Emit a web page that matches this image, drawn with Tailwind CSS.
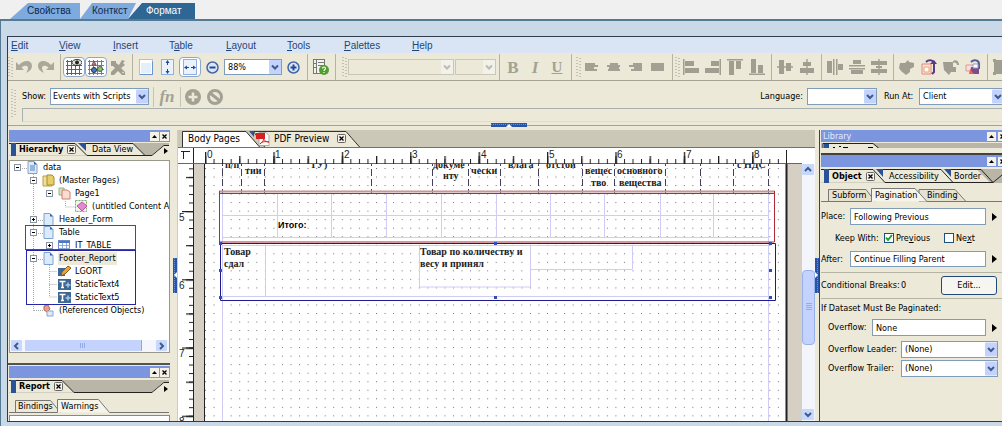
<!DOCTYPE html>
<html lang="ru">
<head>
<meta charset="utf-8">
<title>Формат</title>
<script src="https://cdn.jsdelivr.net/npm/@tailwindcss/browser@4"></script>
</head>
<body class="h-screen overflow-hidden bg-[#f0f0f0] font-['DejaVu_Sans_Condensed','DejaVu_Sans',sans-serif] text-[9px] leading-[13px] text-black">
<svg width="0" height="0" class="absolute">
  <defs>
    <symbol id="chev" viewBox="0 0 12 14"><rect width="12" height="14" rx="1" fill="#c3d3fd"/><path d="M3 5.5l3 3 3-3" fill="none" stroke="#3f5a8c" stroke-width="2"/></symbol>
    <symbol id="chevoff" viewBox="0 0 12 14"><rect width="12" height="14" rx="1" fill="#f3f2ea"/><path d="M3 5.5l3 3 3-3" fill="none" stroke="#bdbcae" stroke-width="2"/></symbol>
    <symbol id="up" viewBox="0 0 9 9"><rect width="9" height="9" fill="#f3f1e8"/><path d="M2 6l2.5-3L7 6z"/></symbol>
    <symbol id="x" viewBox="0 0 9 9"><rect width="9" height="9" fill="#f3f1e8"/><path d="M2.5 2.5l4 4m0-4l-4 4" stroke="#000" stroke-width="1.3"/></symbol>
    <symbol id="tabx" viewBox="0 0 9 9"><rect x=".5" y=".5" width="8" height="8" rx="1" fill="#f6f4e8" stroke="#666"/><path d="M2.5 2.5l4 4m0-4l-4 4" stroke="#000" stroke-width="1.3"/></symbol>
    <symbol id="grip" viewBox="0 0 5 20"><path d="M1 0v20M4 1v19" stroke="#9c9a8c" stroke-dasharray="1 2"/></symbol>
    <symbol id="minus" viewBox="0 0 9 9"><rect x="1.500" y="1.500" width="6" height="6" fill="#fff" stroke="#8a93a0"/><path d="M3 4.500h3" stroke="#000"/></symbol>
    <symbol id="plus" viewBox="0 0 9 9"><rect x="1.500" y="1.500" width="6" height="6" fill="#fff" stroke="#8a93a0"/><path d="M3 4.500h3M4.500 3v3" stroke="#000"/></symbol>
    <symbol id="doc" viewBox="0 0 13 13"><path d="M2 .5h6l3 3v9H2z" fill="#dcebfb" stroke="#7fa3cf"/><path d="M8 .5v3h3z" fill="#2f62a8"/></symbol>
    <symbol id="txt" viewBox="0 0 13 13"><rect y="1" width="13" height="11" fill="#3e6791"/><path d="M1.500 3.500h6M4.500 3.500v6M3 9.500h3" stroke="#fff" stroke-width="1.500"/><path d="M10 4.500v5M7.500 7h5" stroke="#a9c8e8" stroke-width="1.500"/></symbol>
  </defs>
</svg>

<div class="flex h-full flex-col">
  <nav class="flex h-[19px] shrink-0 items-end pl-[10px] font-['Liberation_Sans',sans-serif] text-[10px] leading-4">
    <button class="h-4 w-[70px] bg-[#7eaade] pl-[17px] text-left text-[#10284a] [clip-path:polygon(18px_0,100%_0,100%_100%,0_100%)]">Свойства</button>
    <button class="h-4 w-[56px] bg-[#7eaade] pl-3 text-left text-[#10284a] [clip-path:polygon(12px_0,100%_0,48px_100%,0_100%)]">Конткст</button>
    <button class="-ml-2 h-4 w-[67px] bg-[#2e6694] pl-[18px] text-left text-white [clip-path:polygon(14px_0,100%_0,100%_100%,0_100%)]">Формат</button>
  </nav>

  <div class="flex min-h-0 flex-1 flex-col border-t-2 border-l border-[#557b94] bg-[#cad9e8] pt-[15px] pb-1 pl-[6px]">
    <div class="flex min-h-0 flex-1 flex-col overflow-hidden border border-r-0 border-[#2f3d4a] bg-[#ece9d8]">

      <nav class="flex h-4 shrink-0 items-center bg-[#d9e5f5] pl-[3px] font-['Liberation_Sans',sans-serif] text-[10px] text-[#1d4577]">
        <button class="w-12 text-left"><u>E</u>dit</button>
        <button class="w-[54px] text-left"><u>V</u>iew</button>
        <button class="w-14 text-left"><u>I</u>nsert</button>
        <button class="w-[57px] text-left">T<u>a</u>ble</button>
        <button class="w-[61px] text-left"><u>L</u>ayout</button>
        <button class="w-[57px] text-left"><u>T</u>ools</button>
        <button class="w-[68px] text-left"><u>P</u>alettes</button>
        <button class="text-left"><u>H</u>elp</button>
      </nav>

      <div class="flex h-7 shrink-0 items-center border-b border-[#a5a395] pt-px [&>button]:flex [&>button]:h-5 [&>button]:w-[22px] [&>button]:shrink-0 [&>button]:items-center [&>button]:justify-center [&>i]:mr-[2px] [&>i]:ml-[3px] [&>i]:h-[26px] [&>i]:w-px [&>i]:shrink-0 [&>i]:bg-[#b5b3a4]">
        <svg class="h-5 w-[5px] shrink-0"><use href="#grip"/></svg>
        <button aria-label="Undo"><svg width="16" height="14"><path d="M0 2v8h8L5.500 7.500C8 5 12 5 12 8c0 2-1 3-2 5 4-2 6-4 6-7 0-6-8-7-13-1z" fill="#aaa89b"/></svg></button>
        <button aria-label="Redo"><svg width="16" height="14"><path d="M16 2v8H8l2.500-2.500C8 5 4 5 4 8c0 2 1 3 2 5-4-2-6-4-6-7 0-6 8-7 13-1z" fill="#aaa89b"/></svg></button>
        <i></i>
        <button aria-label="Grid" class="rounded-sm border border-[#8fa6c8] bg-white"><svg width="16" height="16"><path d="M0 2.500h16M0 6.500h16M0 10.500h16M0 14.500h16M1.500 1v15M5.500 1v15M9.500 1v15M13.500 1v15" stroke="#2f66c8"/><ellipse cx="11" cy="3.500" rx="5" ry="3" fill="#dfe6d8" stroke="#333"/><circle cx="11" cy="3.500" r="2" fill="#222"/></svg></button>
        <button aria-label="Snap" class="rounded-sm border border-[#8fa6c8] bg-white"><svg width="16" height="16"><path d="M0 2.500h16M0 6.500h16M0 10.500h16M0 14.500h16M1.500 1v15M5.500 1v15M9.500 1v15M13.500 1v15" stroke="#4f82d8"/><path d="M4 6l2-4 2 4z" fill="#c98a8a" stroke="#7a4a5a"/><circle cx="6" cy="11" r="2.500" fill="#4a78c0" stroke="#234"/><circle cx="12" cy="10" r="2.500" fill="#8fbf6a" stroke="#465"/></svg></button>
        <button aria-label="Tools"><svg width="16" height="16"><path d="M1 2h5v2l3 2 3-5 3 1-2 2 2 2-4 3 4 4v3h-3l-4-4-4 4H1v-3l4-4-2-2H1z" fill="#a09e91"/><path d="M1 11l3-3M12 13l2 1" stroke="#ece9d8" fill="none"/></svg></button>
        <i></i>
        <button aria-label="Full page"><svg width="14" height="16"><rect x=".5" y=".5" width="13" height="15" fill="#fff" stroke="#a9c0e4"/><path d="M2 4h10v10H2z" fill="#e4effc"/><path d="M1 15.500h12.500v-13" stroke="#6b93cf" fill="none"/></svg></button>
        <button aria-label="Fit height"><svg width="14" height="16"><rect x=".5" y=".5" width="12" height="15" fill="#e9f2fd" stroke="#8fb0e0"/><path d="M6.500 2v4M6.500 10v4" stroke="#224a94"/><path d="M4.500 4l2-3 2 3zM4.500 12l2 3 2-3z" fill="#224a94"/></svg></button>
        <button aria-label="Fit width" class="rounded-sm border border-[#8fa6c8] bg-white"><svg width="14" height="16"><rect x=".5" y=".5" width="13" height="15" fill="#e9f2fd" stroke="#8fb0e0"/><path d="M2 8.500h4M8 8.500h4" stroke="#224a94"/><path d="M4 6.500l-3 2 3 2zM10 6.500l3 2-3 2z" fill="#224a94"/></svg></button>
        <button aria-label="Zoom out"><svg width="13" height="13"><circle cx="6.500" cy="6.500" r="5.500" fill="#dbe7f8" stroke="#4467a8" stroke-width="1.500"/><path d="M3.500 6.500h6" stroke="#234a94" stroke-width="2"/></svg></button>
        <div class="relative ml-px h-4 w-[58px] shrink-0">
          <select aria-label="Zoom" class="h-full w-full appearance-none border border-[#7f9db9] bg-white pl-[3px] leading-none"><option>88%</option></select>
          <svg class="pointer-events-none absolute top-px right-px h-[14px] w-3"><use href="#chev"/></svg>
        </div>
        <button aria-label="Zoom in"><svg width="13" height="13"><circle cx="6.500" cy="6.500" r="5.500" fill="#dbe7f8" stroke="#4467a8" stroke-width="1.500"/><path d="M3.500 6.500h6M6.500 3.500v6" stroke="#234a94" stroke-width="2"/></svg></button>
        <i></i>
        <button aria-label="Guide"><svg width="16" height="16"><rect x=".5" y=".5" width="11" height="14" fill="#f3f3ee" stroke="#777"/><path d="M3.500 1v13M5 3.500h6M5 6.500h6M1 4.500h2M1 8.500h2" stroke="#777"/><circle cx="11" cy="11" r="5" fill="#4f9e2f"/><path d="M9.500 9.500c0-2 3-2 3 0 0 1-1.500 1-1.500 2.500M11 13v1" stroke="#fff" fill="none" stroke-width="1.200"/></svg></button>
        <i></i>
        <svg class="ml-1 h-5 w-[5px] shrink-0"><use href="#grip"/></svg>
        <div class="relative ml-px h-4 w-[106px] shrink-0">
          <select aria-label="Font" disabled class="h-full w-full appearance-none border border-[#c9c7ba] bg-[#ece9d8]"></select>
          <svg class="pointer-events-none absolute top-px right-px h-[14px] w-3"><use href="#chevoff"/></svg>
        </div>
        <div class="relative ml-px h-4 w-[41px] shrink-0">
          <select aria-label="Font size" disabled class="h-full w-full appearance-none border border-[#c9c7ba] bg-[#ece9d8]"></select>
          <svg class="pointer-events-none absolute top-px right-px h-[14px] w-3"><use href="#chevoff"/></svg>
        </div>
        <i></i>
        <button class="font-['Liberation_Serif',serif] text-[17px] font-bold text-[#a3a194]">B</button>
        <button class="font-['Liberation_Serif',serif] text-[17px] font-bold text-[#a3a194] italic">I</button>
        <button class="font-['Liberation_Serif',serif] text-[15px] font-bold text-[#a3a194] underline">U</button>
        <i></i>
        <svg class="ml-[2px] h-5 w-[5px] shrink-0"><use href="#grip"/></svg>
        <button aria-label="Align left"><svg width="14" height="8"><path d="M0 1h10M0 3h13M0 5h9M0 7h12" stroke="#a3a194" stroke-width="1.800"/></svg></button>
        <button aria-label="Align center"><svg width="14" height="8"><path d="M3 1h8M0 3h13M2 5h10M1 7h12" stroke="#a3a194" stroke-width="1.800"/></svg></button>
        <button aria-label="Align right"><svg width="14" height="8"><path d="M4 1h9M0 3h13M5 5h8M2 7h11" stroke="#a3a194" stroke-width="1.800"/></svg></button>
        <button aria-label="Justify"><svg width="14" height="8"><path d="M0 1h13M0 3h13M0 5h13M0 7h13" stroke="#a3a194" stroke-width="1.800"/></svg></button>
        <i></i>
        <svg class="h-5 w-[5px] shrink-0"><use href="#grip"/></svg>
        <button aria-label="Left edges"><svg width="16" height="16" fill="#a09e91"><path d="M0 0h1.500v16H0zM2 2h9v5H2zM2 9h14v5H2z"/></svg></button>
        <button aria-label="Right edges"><svg width="16" height="16" fill="#a09e91"><path d="M14.500 0H16v16h-1.500zM6 2h8v5H6zM0 9h14v5H0z"/></svg></button>
        <button aria-label="Top edges"><svg width="16" height="16" fill="#a09e91"><path d="M0 0h16v1.500H0zM2 2h5v14H2zM9 2h5v8H9z"/></svg></button>
        <button aria-label="Bottom edges"><svg width="16" height="16" fill="#a09e91"><path d="M0 14.500h16V16H0zM2 0h5v14H2zM9 6h5v8H9z"/></svg></button>
        <i></i>
        <button aria-label="Middles"><svg width="16" height="16" fill="#a09e91"><path d="M0 7.300h16v1.400H0zM2 1h5v14H2zM9 4h5v8H9z"/></svg></button>
        <button aria-label="Centers"><svg width="16" height="16" fill="#a09e91"><path d="M7.300 0h1.400v16H7.300zM4 3h8v4H4zM1 9h14v5H1z"/></svg></button>
        <i></i>
        <button aria-label="Spread across"><svg width="16" height="16" fill="#a09e91"><path d="M0 2h5v12H0zM6 0h1.500v16H6zM9 0h1.500v16H9zM11 5h5v6h-5z"/></svg></button>
        <button aria-label="Spread down"><svg width="16" height="16" fill="#a09e91"><path d="M4 1h8v4H4zM0 6h16v1.500H0zM0 9h16v1.500H0zM2 11h12v4H2z"/></svg></button>
        <button aria-label="Center in page"><svg width="16" height="16" fill="#a09e91"><path d="M0 2h16v4H0zM5 7h6v2H5zM0 10h16v4H0zM7.300 0h1.400v16H7.300z"/></svg></button>
        <i></i>
        <button aria-label="Bring forward"><svg width="16" height="16" fill="#a09e91"><path d="M1 4h5l3-3 1 2 5 1v4l-4 2v3l-4 3-5-4-2-3z"/></svg></button>
        <button aria-label="Bring to front"><svg width="16" height="16"><path d="M1 5h9v10H1z" fill="#fbe3da" stroke="#e08a78"/><path d="M3 8h5v5H3z" fill="#fff" stroke="#e8a070"/><path d="M5 3c3-3 8-2 8 2v8l-2 2" fill="none" stroke="#5a3c86" stroke-width="2"/><path d="M9 5h7l-3-4z" fill="#5a3c86"/></svg></button>
        <button aria-label="Send backward"><svg width="16" height="16" fill="#a09e91"><path d="M0 3h10v5h3v5H8l-2 3-5-5zM10 2c3-2 6 0 6 4h-2c0-2-2-3-4-2z"/></svg></button>
        <button aria-label="Send to back"><svg width="16" height="16"><path d="M1 6h8v6H1z" fill="#f8ded9" stroke="#d99"/><path d="M6 8h8v7H5z" fill="#7d4a8c"/><path d="M6 3c3-3 8-2 8 2v5" fill="none" stroke="#4d5c9a" stroke-width="2"/><path d="M5 10l4 5-5 0z" fill="#e0664c"/><path d="M8 5h5v4H8z" fill="#fff" stroke="#99b"/></svg></button>
        <i></i>
        <button aria-label="Group"><svg width="16" height="16" fill="#a09e91"><path d="M0 0h3v1h13v14H3v1H0v-3h1V3H0z"/></svg></button>
      </div>

      <div class="flex h-[45px] shrink-0 gap-[6px] border-b border-[#a5a395] pl-[3px]">
        <svg class="mt-2 h-7 w-[5px] shrink-0" viewBox="0 0 5 28"><path d="M1 0v28M4 1v27" stroke="#9c9a8c" stroke-dasharray="1 2"/></svg>
        <div class="flex min-w-0 flex-1 flex-col">
          <div class="flex h-[27px] shrink-0 items-center pt-1">
            <label for="show" class="w-7 shrink-0">Show:</label>
            <div class="relative h-[17px] w-[99px] shrink-0">
              <select id="show" class="h-full w-full appearance-none border border-[#7f9db9] bg-white pl-[2px] leading-none"><option>Events with Scripts</option></select>
              <svg class="pointer-events-none absolute top-px right-px h-[15px] w-3"><use href="#chev"/></svg>
            </div>
            <span class="mr-[2px] ml-1 h-5 w-px bg-[#c5c3b4]"></span>
            <button class="w-[22px] font-['Liberation_Serif',serif] text-[17px] font-bold text-[#a3a194] italic">fn</button>
            <span class="mr-1 ml-[2px] h-5 w-px bg-[#c5c3b4]"></span>
            <button aria-label="Add" class="w-[22px]"><svg width="16" height="16"><circle cx="8" cy="8" r="8" fill="#a3a194"/><path d="M3.500 8h9M8 3.500v9" stroke="#ece9d8" stroke-width="2.500"/></svg></button>
            <button aria-label="Cancel"><svg width="16" height="16"><circle cx="8" cy="8" r="6.500" fill="none" stroke="#a3a194" stroke-width="3"/><path d="M3 4l10 8" stroke="#a3a194" stroke-width="3"/></svg></button>
            <label for="lang" class="mr-1 ml-auto">Language:</label>
            <div class="relative h-[17px] w-[70px] shrink-0">
              <select id="lang" class="h-full w-full appearance-none border border-[#7f9db9] bg-white"></select>
              <svg class="pointer-events-none absolute top-px right-px h-[15px] w-3"><use href="#chev"/></svg>
            </div>
            <label for="runat" class="ml-[7px] w-[35px] shrink-0 whitespace-nowrap">Run At:</label>
            <div class="relative -mr-[3px] h-[17px] w-[86px] shrink-0">
              <select id="runat" class="h-full w-full appearance-none border border-[#7f9db9] bg-white pl-[3px] leading-none"><option>Client</option></select>
              <svg class="pointer-events-none absolute top-px right-px h-[15px] w-3"><use href="#chev"/></svg>
            </div>
          </div>
          <input aria-label="Script" disabled class="h-[14px] w-full border border-r-0 border-[#a9b0ae] border-b-[#dedbca] bg-[#ece9d8]">
        </div>
      </div>

      <div class="relative flex min-h-0 flex-1 pt-1">
        <svg class="absolute -top-[3px] left-1/2 -ml-[14px]" width="36" height="4"><rect width="36" height="4" fill="#2855a8"/><path d="M0 1.500h36" stroke="#6d93d8" stroke-dasharray="1 1"/><path d="M15 4l3-3 3 3z" fill="#fff"/></svg>

        <aside class="flex w-[162px] shrink-0 flex-col">
          <section class="flex min-h-0 flex-1 flex-col border-b-2 border-[#55534a] pl-px">
            <div class="flex h-3 shrink-0 items-center justify-end gap-px bg-[#7b96df] pr-px"><svg width="9" height="9"><use href="#up"/></svg><svg width="9" height="9"><use href="#x"/></svg></div>
            <div class="relative mt-px flex h-[13px] shrink-0 items-center">
              <svg class="absolute inset-0" width="160" height="13"><rect width="160" height="13" fill="#b9b6a8"/><path d="M0 .5h66l12 12H0z" fill="#ece9d8"/><path d="M66 .5l12 12h58L124 .5z" fill="#ece9d8"/><path d="M0 .5h66l12 12h58L124 .5H74M136 12.500h7l12-10h5" fill="none" stroke="#222"/><path d="M143 13l12-10h5v10z" fill="#ece9d8"/><path d="M2 0h5v13H2zM69 0h8v8z" fill="#2a5298"/><path d="M155 5l4 3-4 3z"/></svg>
              <button class="relative ml-[10px] flex w-[73px] items-center gap-1 font-bold">Hierarchy<svg width="9" height="9"><use href="#tabx"/></svg></button>
              <button class="relative whitespace-nowrap">Data View</button>
            </div>
            <div class="mt-1 mb-[10px] flex min-h-0 flex-1 flex-col border border-[#9a988a] bg-white">
              <ul class="relative flex-1 overflow-hidden whitespace-nowrap [&>li]:flex [&>li]:h-[13px] [&>li]:items-center [&>li]:gap-1 [&>li>svg]:shrink-0">
                <svg class="absolute inset-0" width="160" height="170"><path d="M23.500 13v137M24 149.500h10M24 59.500h10M24 72.500h10M24 98.500h10M39.500 33v4M55.500 40v6h10M39.500 104v32h8M39.500 110.500h8M39.500 123.500h8M12 7.500h6" fill="none" stroke="#aaa" stroke-dasharray="1 1"/></svg>
                <li class="relative pl-[3px]"><svg width="9" height="9"><use href="#minus"/></svg><svg width="13" height="13"><use href="#doc"/><path d="M4 5h5M4 7h5M4 9h5" stroke="#5580b8"/></svg>data</li>
                <li class="relative pl-[19px]"><svg width="9" height="9"><use href="#minus"/></svg><svg width="13" height="13"><path d="M1 2h6l3 2v8H1z" fill="#efe0a0" stroke="#b99d3a"/><path d="M5 1h5l2 2v8H5z" fill="#e6cf6a" stroke="#a98a2a"/></svg>(Master Pages)</li>
                <li class="relative pl-[35px]"><svg width="9" height="9"><use href="#minus"/></svg><svg width="13" height="13"><path d="M1 1h5v7H1z" fill="#d7e3c8" stroke="#9aaf88"/><path d="M4 3h5l3 2v7H4z" fill="#fbdcd0" stroke="#cc8070"/></svg>Page1</li>
                <li class="relative pl-[65px]"><svg width="13" height="13"><rect x=".5" y=".5" width="11" height="11" fill="#eef6e6" stroke="#7fa86a" stroke-dasharray="2 1"/><path d="M7 2l5 4-5 5-5-5z" fill="#e08ad0" stroke="#c050b0"/></svg>(untitled Content Ar</li>
                <li class="relative pl-[19px]"><svg width="9" height="9"><use href="#plus"/></svg><svg width="13" height="13"><use href="#doc"/></svg>Header_Form</li>
                <li class="relative pl-[19px]"><svg width="9" height="9"><use href="#minus"/></svg><svg width="13" height="13"><use href="#doc"/></svg>Table</li>
                <li class="relative pl-[35px]"><svg width="9" height="9"><use href="#plus"/></svg><svg width="13" height="13"><rect x=".5" y="1.500" width="11" height="10" fill="#fff" stroke="#6a8cc8"/><path d="M1 2h11v2H1z" fill="#4f78c0"/><path d="M1 6.500h11M1 9.500h11M4.500 4v8M8.500 4v8" stroke="#8fa9da"/></svg>IT_TABLE</li>
                <li class="relative pl-[19px]"><svg width="9" height="9"><use href="#minus"/></svg><svg width="13" height="13"><use href="#doc"/></svg><span class="-ml-px bg-[#ece9d8] px-px">Footer_Report</span></li>
                <li class="relative pl-[48px]"><svg width="13" height="13"><path d="M0 3h7v8H0z" fill="#3e6791"/><path d="M3 11l1-4 6-6 3 2-6 6z" fill="#eda23c" stroke="#8a5a20"/></svg>LGORT</li>
                <li class="relative pl-[48px]"><svg width="13" height="13"><use href="#txt"/></svg>StaticText4</li>
                <li class="relative pl-[48px]"><svg width="13" height="13"><use href="#txt"/></svg>StaticText5</li>
                <li class="relative pl-[32px]"><svg width="13" height="13"><path d="M2 2l4-1 2 4-3 3-3-2z" fill="#e8a088" stroke="#b06a58"/><path d="M5 7h6v5H5z" fill="#dfe9f8" stroke="#8aa5d0"/></svg>(Referenced Objects)</li>
                <svg class="absolute inset-0" width="160" height="170"><rect x="15.500" y="64.500" width="110" height="24" fill="none" stroke="#e01020"/><rect x="16.500" y="89.500" width="109" height="54" fill="none" stroke="#2525a8"/></svg>
              </ul>
              <svg class="h-[12px] w-full shrink-0"><rect width="160" height="12" fill="#f5f6fb"/><rect x="1" width="11" height="11" rx="1" fill="#c8d7fc"/><path d="M8 3L5 6l3 3" fill="none" stroke="#3f5a8c" stroke-width="2"/><rect x="15" width="116" height="11" rx="1" fill="#c3d3fd"/><path d="M131.500 0v11" stroke="#8fa9e0"/><path d="M70.500 3v5M72.500 3v5M74.500 3v5" stroke="#93abe8"/><rect x="146" width="11" height="11" rx="1" fill="#c8d7fc"/><path d="M150 3l3 3-3 3" fill="none" stroke="#3f5a8c" stroke-width="2"/></svg>
            </div>
          </section>
          <section class="flex h-[56px] shrink-0 flex-col pt-px pl-px">
            <div class="flex h-3 shrink-0 items-center justify-end gap-px bg-[#7b96df] pr-px"><svg width="9" height="9"><use href="#up"/></svg><svg width="9" height="9"><use href="#x"/></svg></div>
            <div class="relative mt-[2px] flex h-[13px] shrink-0 items-center">
              <svg class="absolute inset-0" width="160" height="13"><rect width="160" height="13" fill="#b9b6a8"/><path d="M0 .5h53l12 12H0z" fill="#ece9d8"/><path d="M0 .5h53l12 12h78l12-10h5" fill="none" stroke="#222"/><path d="M143 13l12-10h5v10z" fill="#ece9d8"/><path d="M2 0h5v13H2z" fill="#2a5298"/><path d="M155 6l4 3-4 3z"/></svg>
              <button class="relative ml-[10px] flex items-center gap-1 font-bold">Report<svg width="9" height="9"><use href="#tabx"/></svg></button>
            </div>
            <div class="relative mt-[6px] flex h-[14px] shrink-0 items-center">
              <svg class="absolute inset-0" width="160" height="14" fill="#ece9d8" stroke="#777"><path d="M6.500 13.500V1.500h35l10 12"/><path d="M0 13.500h48.500V.5h41l11 13H160" fill="#f6f4ea"/></svg>
              <button class="relative ml-[9px] w-[43px] text-left">Bindings</button>
              <button class="relative">Warnings</button>
            </div>
            <div class="mt-[2px] h-5 shrink-0 border border-[#888] bg-white"></div>
          </section>
        </aside>
        <div class="flex w-2 shrink-0 items-center justify-end border-r border-[#cfccbd]"><svg width="4" height="35"><rect width="4" height="35" fill="#2855a8"/><path d="M1.500 0v35" stroke="#6d93d8" stroke-dasharray="1 1"/><path d="M4 14l-3 3 3 3z" fill="#fff"/></svg></div>

        <main class="flex min-w-0 flex-1 flex-col">
          <div class="relative flex h-[18px] shrink-0 items-center border-b border-[#6f7468] bg-[#cbc8b8]">
            <svg class="absolute inset-0" width="200" height="17" stroke="#333"><path d="M75.500 1.500H168l14 16H87z" fill="#ece9d8"/><path d="M4.500 17.500V1.500H68l14 16z" fill="#fff"/><path d="M71 1h5v6z" fill="#2a5298" stroke="none"/></svg>
            <button class="relative ml-[10px] w-[68px] text-left text-[10px] whitespace-nowrap">Body Pages</button>
            <button class="relative flex items-center gap-1 text-[10px] whitespace-nowrap"><svg width="14" height="14"><path d="M3 .5h7l3 3v10H3z" fill="#fff" stroke="#aaa"/><rect width="9" height="6" y="1" fill="#d42020"/><path d="M4 12c4-3 4-5 3-7 0 3 3 5 6 5-4-1-8 0-9 2z" fill="none" stroke="#d42020"/></svg>PDF Preview<svg class="ml-1" width="9" height="9"><use href="#tabx"/></svg></button>
          </div>
          <div class="flex min-h-0 flex-1 bg-white">
            <svg class="min-w-0 flex-1" height="100%" viewBox="178 147 624 275" preserveAspectRatio="xMinYMin slice">
              <defs>
                <pattern id="dots" x="205" y="167" width="8.550" height="8.530" patternUnits="userSpaceOnUse"><rect width="1" height="1" fill="#70707a"/></pattern>
                <pattern id="ht" x="205" y="147" width="8.550" height="16" patternUnits="userSpaceOnUse"><rect y="11" width="1" height="5" fill="#222"/></pattern>
                <pattern id="hh" x="205" y="147" width="34.200" height="16" patternUnits="userSpaceOnUse"><rect y="8" width="1.300" height="8" fill="#222"/></pattern>
                <pattern id="hw" x="205" y="147" width="68.400" height="16" patternUnits="userSpaceOnUse"><rect y="4" width="1.300" height="12" fill="#222"/></pattern>
                <pattern id="vt" x="178" y="210" width="16" height="8.530" patternUnits="userSpaceOnUse"><rect x="11" width="4" height="1" fill="#222"/></pattern>
                <pattern id="vh" x="178" y="210" width="16" height="34.120" patternUnits="userSpaceOnUse"><rect x="8" width="7" height="1.200" fill="#222"/></pattern>
                <pattern id="vw" x="178" y="210" width="16" height="68.240" patternUnits="userSpaceOnUse"><rect x="4" width="11" height="1.200" fill="#222"/></pattern>
                <clipPath id="page"><rect x="205" y="163" width="600" height="300"/></clipPath>
              </defs>
              <rect x="178" y="147" width="700" height="300" fill="#fff"/>
              <rect x="193" y="162" width="610" height="300" fill="#d5d0c3"/>
              <rect x="205" y="162" width="582" height="300" fill="#fff"/>
              <path d="M193.500 147v300M204.500 162v300M786.500 149v300" stroke="#222"/>
              <path d="M786.500 162v300" stroke="#222" stroke-width="2"/>
              <path d="M178 162.500h625" stroke="#666"/>
              <rect x="205" y="147" width="582" height="16" fill="url(#ht)"/><rect x="205" y="147" width="582" height="16" fill="url(#hh)"/><rect x="205" y="147" width="582" height="16" fill="url(#hw)"/>
              <rect x="178" y="164" width="16" height="270" fill="url(#vt)"/><rect x="178" y="164" width="16" height="270" fill="url(#vh)"/><rect x="178" y="164" width="16" height="270" fill="url(#vw)"/>
              <path d="M181 150.500h9M183.500 150v8" stroke="#222"/>
              <g font-family="Liberation Sans, sans-serif" font-size="10" fill="#222">
                <text x="207" y="157">0</text><text x="275" y="157">1</text><text x="344" y="157">2</text><text x="412" y="157">3</text><text x="481" y="157">4</text><text x="549" y="157">5</text><text x="617" y="157">6</text><text x="686" y="157">7</text><text x="754" y="157">8</text>
                <text x="179" y="220">5</text><text x="179" y="288">6</text><text x="179" y="356">7</text><text x="179" y="424">8</text>
              </g>
              <g clip-path="url(#page)">
                <rect x="205" y="163" width="580" height="300" fill="url(#dots)"/>
                <path d="M222.500 192v300M768.500 192v300" stroke="#cfcdf4"/>
                <path d="M222 214.500h546M222 236.500h546M277.500 192v44M331.500 192v44M386.500 192v44M441.500 192v44M496.500 192v44M550.500 192v44M604.500 192v44M660.500 192v44M713.500 192v44M222 295.500h547M222 244.500h547M265.500 244v51M419.500 244v42h111M530.500 244v42M530.500 268.500h102M632.500 244v24" fill="none" stroke="#cfcdf4"/>
                <path d="M222.500 158v35M241.500 158v35M264.500 158v35M371.500 158v35M432.500 158v35M468.500 158v35M500.500 158v35M538.500 158v35M582.500 158v35M614.500 158v35M665.500 158v35M700.500 158v35M733.500 158v35M768.500 158v35" stroke="#44405c" stroke-dasharray="7 3"/>
                <g font-family="Liberation Serif, serif" font-size="10" font-weight="bold" fill="#222">
                  <text x="225" y="167">п/п</text><text x="245" y="173">тии</text><text x="310" y="167">ТУ)</text><text x="433" y="167">докуме</text><text x="443" y="178">нту</text><text x="471" y="173">чески</text><text x="508" y="167">влага</text><text x="546" y="167">отстой</text><text x="585" y="173">вещес</text><text x="591" y="185">тво</text><text x="617" y="173">основного</text><text x="619" y="185">вещества</text><text x="737" y="167">с НДС</text>
                  <text x="224" y="254">Товар</text><text x="224" y="266">сдал</text><text x="420" y="254">Товар по количеству и</text><text x="420" y="266">весу и принял</text>
                </g>
                <text x="278" y="227" font-family="Liberation Sans, sans-serif" font-size="9" font-weight="bold">Итого:</text>
                <path d="M219 190.500h556" stroke="#cf9296" stroke-width="2"/>
                <path d="M219.500 190v51h555v-51M220 192.500h554" fill="none" stroke="#b02a3a"/>
                <path d="M220.500 242.500h555v57h-555z" fill="none" stroke="#1b1b8c"/>
                <g fill="#2c50b4"><path d="M219 241h3v3h-3zM219 268h3v3h-3zM219 295h3v3h-3zM494 241h3v3h-3zM494 295h3v3h-3zM769 241h3v3h-3zM769 268h3v3h-3zM769 295h3v3h-3z"/></g>
              </g>
            </svg>
            <div class="mt-4 flex w-[13px] shrink-0 flex-col bg-[#f4f5fb]">
              <svg width="12" height="12"><rect width="12" height="11" rx="1" fill="#c8d7fc"/><path d="M3 7l3-3 3 3" fill="none" stroke="#3f5a8c" stroke-width="2"/></svg>
              <div class="grow-94"></div>
              <div class="flex min-h-0 grow-66 items-center justify-center rounded-sm border border-[#98b0ec] bg-[#c3d3fd]"><svg width="6" height="8"><path d="M0 .5h6M0 2.500h6M0 4.500h6M0 6.500h6" stroke="#93abe8"/></svg></div>
              <div class="grow-64"></div>
              <svg width="12" height="12"><rect width="12" height="11" rx="1" fill="#c8d7fc"/><path d="M3 4l3 3 3-3" fill="none" stroke="#3f5a8c" stroke-width="2"/></svg>
            </div>
          </div>
        </main>
        <div class="flex w-[5px] shrink-0 items-center border-r border-[#44423a]"><svg width="4" height="35"><rect width="4" height="35" fill="#2855a8"/><path d="M2.500 0v35" stroke="#6d93d8" stroke-dasharray="1 1"/><path d="M0 14l3 3-3 3z" fill="#fff"/></svg></div>

        <aside class="flex w-[182px] shrink-0 flex-col overflow-hidden pl-px">
          <div class="-mr-[6px] flex h-3 shrink-0 items-center gap-[2px] bg-[#7b96df] pr-px pl-[2px] leading-3 text-[#e3eaff]"><span class="flex-1">Library</span><svg width="9" height="9"><use href="#up"/></svg><svg width="9" height="9"><use href="#x"/></svg></div>
          <svg class="mt-px shrink-0" width="182" height="12"><rect width="182" height="5" fill="#b9b6a8"/><path d="M2 .5h50l6 5H2z" fill="#ece9d8" stroke="#222"/><path d="M0 5h182v5H0z" fill="#ece9d8"/><path d="M3 1h5v4H3z" fill="#2a5298"/><path d="M12 4.500h2M18 3.500h2M22 4.500h5M47 4.500h5" stroke="#000"/><path d="M0 11h182" stroke="#44423a" stroke-width="2"/></svg>
          <div class="-mr-[6px] flex h-3 shrink-0 items-center justify-end gap-[2px] bg-[#7b96df] pr-px"><svg width="9" height="9"><use href="#up"/></svg><svg width="9" height="9"><use href="#x"/></svg></div>
          <div class="relative mt-[2px] flex h-[14px] shrink-0 items-center">
            <svg class="absolute inset-0" width="182" height="14"><rect width="182" height="14" fill="#b9b6a8"/><path d="M0 .5h156l13 13H0z" fill="#ece9d8"/><path d="M0 .5h52l12 13h68L120 .5H56M124 .5h36l12 13 6-5 6-5M132 13.500h40" fill="none" stroke="#222"/><path d="M3 0h5v14H3zM55 0h7v8zM123 0h7v8z" fill="#2a5298"/></svg>
            <button class="relative ml-[11px] flex w-[57px] items-center gap-1 font-bold">Object<svg width="9" height="9"><use href="#tabx"/></svg></button>
            <button class="relative w-[65px] text-left">Accessibility</button>
            <button class="relative">Border</button>
          </div>
          <div class="relative mt-[5px] flex h-[14px] shrink-0 items-center">
            <svg class="absolute inset-0" width="182" height="14" fill="#e6e2cf" stroke="#777"><path d="M7.500 13.500V1.500H45l9 12M98 1.500h36l11 12H98z"/><path d="M0 13.500h50.500V.5H94l12 13h80" fill="#f6f4ea"/></svg>
            <button class="relative ml-[11px] w-[43px] text-left">Subform</button>
            <button class="relative w-[52px] text-left">Pagination</button>
            <button class="relative">Binding</button>
          </div>

          <div class="mt-[6px] flex h-[17px] shrink-0 items-center">
            <label for="place" class="w-[29px]">Place:</label>
            <input id="place" value="Following Previous" class="h-full w-[136px] border border-[#7f9db9] bg-white px-[3px]">
            <svg class="ml-[6px]" width="5" height="8"><path d="M0 0l5 4-5 4z"/></svg>
          </div>
          <div class="flex h-[26px] shrink-0 items-center pl-[14px]">
            <span class="w-[49px] whitespace-nowrap">Keep With:</span>
            <label class="flex w-[60px] items-center gap-[2px]"><span class="relative flex"><input type="checkbox" checked class="h-[10px] w-[10px] appearance-none border border-[#1c5180] bg-white"><svg class="pointer-events-none absolute inset-0" width="10" height="10"><path d="M2 4.500l2 2.500 4-5" fill="none" stroke="#21a121" stroke-width="2"/></svg></span><span>Pre<u>v</u>ious</span></label>
            <label class="flex items-center gap-[2px]"><input type="checkbox" class="h-[10px] w-[10px] appearance-none border border-[#1c5180] bg-white"><span>Ne<u>x</u>t</span></label>
          </div>
          <div class="flex h-4 shrink-0 items-center">
            <label for="after" class="w-[29px]">After:</label>
            <input id="after" value="Continue Filling Parent" class="h-full w-[136px] border border-[#7f9db9] bg-white px-[3px]">
            <svg class="ml-[6px]" width="5" height="8"><path d="M0 0l5 4-5 4z"/></svg>
          </div>
          <div class="mt-[5px] flex h-[27px] shrink-0 items-center border-y border-[#b5b3a4] pr-[5px]">
            <span class="w-[80px] whitespace-nowrap">Conditional Breaks:</span><span class="flex-1">0</span>
            <button class="h-[19px] w-[56px] rounded-[3px] border border-[#1f4a7a] bg-[#f6f5ef]">Edit...</button>
          </div>
          <p class="mt-[3px] shrink-0">If Dataset Must Be Paginated:</p>
          <div class="mt-1 flex h-[17px] shrink-0 items-center pl-[7px]">
            <label for="ov" class="w-11">Overflow:</label>
            <input id="ov" value="None" class="h-full w-[114px] border border-[#7f9db9] bg-white px-[3px]">
            <svg class="ml-[6px]" width="5" height="8"><path d="M0 0l5 4-5 4z"/></svg>
          </div>
          <div class="mt-[5px] flex h-[17px] shrink-0 items-center pl-[7px]">
            <label for="ol" class="w-[73px] whitespace-nowrap">Overflow Leader:</label>
            <div class="relative h-full w-[97px]"><select id="ol" class="h-full w-full appearance-none border border-[#7f9db9] bg-white pl-[3px] leading-none"><option>(None)</option></select><svg class="pointer-events-none absolute top-px right-px h-[15px] w-3"><use href="#chev"/></svg></div>
          </div>
          <div class="mt-[2px] flex h-[17px] shrink-0 items-center pl-[7px]">
            <label for="ot" class="w-[73px] whitespace-nowrap">Overflow Trailer:</label>
            <div class="relative h-full w-[97px]"><select id="ot" class="h-full w-full appearance-none border border-[#7f9db9] bg-white pl-[3px] leading-none"><option>(None)</option></select><svg class="pointer-events-none absolute top-px right-px h-[15px] w-3"><use href="#chev"/></svg></div>
          </div>
        </aside>
      </div>
    </div>
  </div>
</div>
</body>
</html>
